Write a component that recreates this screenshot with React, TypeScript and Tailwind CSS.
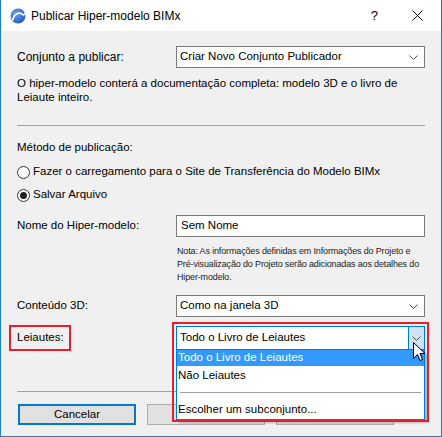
import React from "react";

const font = "font-['Segoe_UI','Liberation_Sans',Arial,sans-serif]";

function Chevron() {
  return (
    <svg width="9" height="5" viewBox="0 0 9 5" className="shrink-0">
      <path d="M0.5 0.5 L4.5 4.5 L8.5 0.5" fill="none" stroke="#505050" strokeWidth="1" />
    </svg>
  );
}

function Select({ value }: { value: string }) {
  return (
    <div className="flex h-[22px] w-[249px] items-center justify-between border border-[#7a7a7a] bg-white pl-[3px] pr-[6px]">
      <span>{value}</span>
      <Chevron />
    </div>
  );
}

function Radio({ checked, label }: { checked?: boolean; label: string }) {
  return (
    <div className="flex h-[18px] items-center gap-[3px]">
      <div className="flex h-[13px] w-[13px] items-center justify-center rounded-full border border-[#333] bg-white">
        {checked && <div className="h-[7px] w-[7px] rounded-full bg-[#222]" />}
      </div>
      <span>{label}</span>
    </div>
  );
}

function AppIcon() {
  return (
    <svg width="16" height="16" viewBox="0 0 16 16">
      <defs>
        <radialGradient id="g" cx="0.35" cy="0.35" r="0.8">
          <stop offset="0" stopColor="#6aa3ef" />
          <stop offset="1" stopColor="#1c4fb8" />
        </radialGradient>
      </defs>
      <circle cx="8" cy="8" r="7.5" fill="url(#g)" />
      <path d="M2.5 12.5 C4 6 9 3 13.5 7" fill="none" stroke="white" strokeWidth="1.6" />
      <path d="M12 6 L14 7.6 L14.6 5" fill="none" stroke="white" strokeWidth="1" />
    </svg>
  );
}

function Cursor() {
  return (
    <svg width="13" height="21" viewBox="0 0 13 21" className="absolute left-[237px] top-[16px]">
      <path
        d="M0.5 0.5 L0.5 16.5 L4.5 12.5 L7 18.5 L9.5 17.5 L7 11.5 L12 11.5 Z"
        fill="white"
        stroke="black"
        strokeWidth="1"
        strokeLinejoin="miter"
      />
    </svg>
  );
}

export default function App() {
  return (
    <div className={`${font} relative h-[437px] w-[442px] overflow-hidden border-x border-b border-[#1a7fd4] bg-[#f0f0f0] text-[11.5px] text-[#000]`}>
      {/* title bar */}
      <div className="flex h-[31px] items-center bg-white pl-[9px]">
        <AppIcon />
        <span className="ml-[5px] text-[12px]">Publicar Hiper-modelo BIMx</span>
        <span className="ml-auto mr-[34px] text-[13px]">?</span>
        <svg width="11" height="11" viewBox="0 0 11 11" className="mr-[18px]">
          <path d="M0.5 0.5 L10.5 10.5 M10.5 0.5 L0.5 10.5" stroke="#111" strokeWidth="1" />
        </svg>
      </div>

      <div className="px-[16px]">
        <div className="mt-[15px] flex items-center">
          <span className="w-[159px] text-[12px]">Conjunto a publicar:</span>
          <Select value="Criar Novo Conjunto Publicador" />
        </div>
        <p className="mt-[8px] leading-[14px]">
          O hiper-modelo conterá a documentação completa: modelo 3D e o livro de
          <br />
          Leiaute inteiro.
        </p>
        <div className="mt-[21px] h-px bg-[#a0a0a0]" />

        <p className="mt-[13px] leading-[16px]">Método de publicação:</p>
        <div className="mt-[8px]">
          <Radio label="Fazer o carregamento para o Site de Transferência do Modelo BIMx" />
        </div>
        <div className="mt-[5px]">
          <Radio checked label="Salvar Arquivo" />
        </div>

        <div className="mt-[11px] flex items-center">
          <span className="w-[159px]">Nome do Hiper-modelo:</span>
          <div className="flex h-[22px] w-[249px] items-center border border-[#7a7a7a] bg-white pl-[4px]">Sem Nome</div>
        </div>
        <p className="ml-[160px] mt-[8px] whitespace-nowrap text-[9px] leading-[13px] tracking-[-0.15px] text-[#222]">
          Nota: As informações definidas em Informações do Projeto e
          <br />
          Pré-visualização do Projeto serão adicionadas aos detalhes do
          <br />
          Hiper-modelo.
        </p>

        <div className="mt-[11px] flex items-center">
          <span className="w-[159px]">Conteúdo 3D:</span>
          <Select value="Como na janela 3D" />
        </div>

        <div className="mt-[8px] flex items-center">
          <div className="w-[159px]">
            <span className="-ml-[8px] inline-flex h-[26px] w-[62px] items-center border-2 border-[#e8202a] pl-[6px]">Leiautes:</span>
          </div>
          <div className="relative z-10 h-[24px] w-[249px]">
            <div className="flex h-[24px] items-center border border-[#0078d7] bg-white pl-[3px]">
              <span className="flex-1">Todo o Livro de Leiautes</span>
              <div className="flex h-full w-[16px] items-center justify-center border-l border-[#0078d7] bg-[#cce4f7]">
                <Chevron />
              </div>
            </div>
            <div className="absolute left-0 top-[24px] w-[249px] border border-t-0 border-[#0078d7] bg-white shadow-[3px_3px_2px_rgba(0,0,0,0.25)]">
              <div className="flex h-[16px] items-center bg-[#3399ff] pl-[1px] text-white">Todo o Livro de Leiautes</div>
              <div className="flex h-[20px] items-center pl-[1px]">Não Leiautes</div>
              <div className="mx-[3px] mt-[6px] h-px bg-[#a0a0a0]" />
              <div className="flex h-[26px] items-center pl-[1px] pt-[8px]">Escolher um subconjunto...</div>
            </div>
            <div className="pointer-events-none absolute -left-[4px] -top-[4px] h-[100px] w-[257px] border-2 border-[#e8202a]" />
            <Cursor />
          </div>
        </div>

        <div className="mt-[40px] h-px bg-[#a0a0a0]" />

        <div className="mt-[12px] flex gap-[11px] pl-[1px]">
          <div className="flex h-[21px] w-[118px] items-center justify-center border-2 border-[#0078d7] bg-[#e1e1e1]">Cancelar</div>
          <div className="h-[21px] w-[118px] border border-[#adadad] bg-[#e1e1e1]" />
          <div className="h-[21px] w-[118px] border border-[#adadad] bg-[#e1e1e1]" />
        </div>
      </div>
    </div>
  );
}
